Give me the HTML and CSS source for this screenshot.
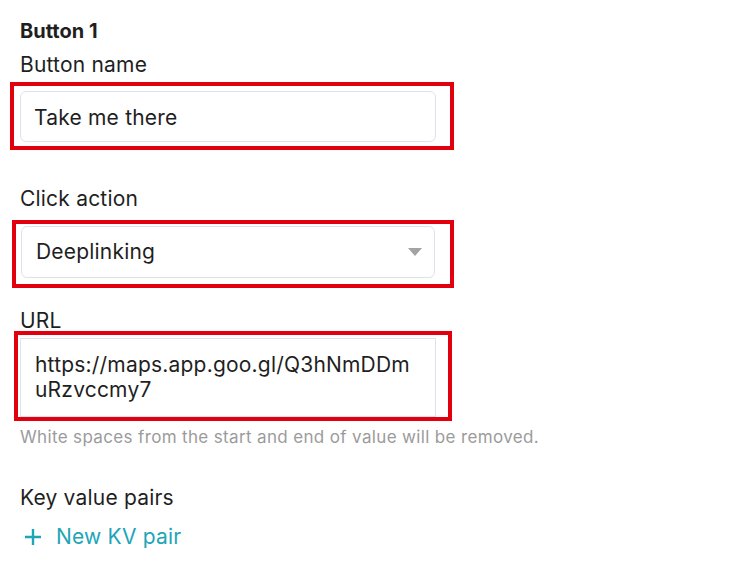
FILE: index.html
```html
<!DOCTYPE html>
<html lang="en">
<head>
<meta charset="utf-8">
<title>Button 1</title>
<link rel="stylesheet" href="styles.css">
</head>
<body>
<div class="panel">
  <div class="title">Button 1</div>
  <div class="label label-first">Button name</div>
  <div class="field field-name">
    <div class="input">Take me there</div>
    <span class="mark mark-name"></span>
  </div>

  <div class="label label-action">Click action</div>
  <div class="field field-select">
    <div class="select">
      <span>Deeplinking</span>
      <span class="caret"></span>
    </div>
    <span class="mark mark-select"></span>
  </div>

  <div class="label label-url">URL</div>
  <div class="field field-url">
    <div class="textarea">https://maps.app.goo.gl/Q3hNmDDm<br>uRzvccmy7</div>
    <span class="mark mark-url"></span>
  </div>
  <div class="hint">White spaces from the start and end of value will be removed.</div>

  <div class="label label-kv">Key value pairs</div>
  <div class="add">
    <svg class="plus" width="18" height="18" viewBox="0 0 18 18" aria-hidden="true">
      <path d="M9 1v16M1 9h16" stroke="currentColor" stroke-width="2.4" fill="none"/>
    </svg>
    <span>New KV pair</span>
  </div>
</div>
</body>
</html>
```
FILE: styles.css
```css
html, body {
  margin: 0;
  padding: 0;
  background: #ffffff;
}
body {
  font-family: Inter, "Noto Sans", "Liberation Sans", sans-serif;
  color: #1f1f1f;
  font-size: 21px;
  letter-spacing: 0.2px;
  line-height: 24px;
}
.panel {
  padding: 19px 0 0 20px;
  width: 416px;
}
.title {
  font-weight: 700;
  font-size: 20px;
  letter-spacing: 0;
}
.label-first { margin-top: 10px; }
.label-action { margin-top: 45px; }
.label-url { margin-top: 31px; }
.label-kv { margin-top: 39px; }

.field {
  position: relative;
}
.field-name { margin-top: 14px; }
.field-select { margin-top: 15px; }
.field-url { margin-top: 5px; }

.input {
  box-sizing: border-box;
  height: 51px;
  border: 1px solid #dde2ee;
  border-radius: 6px;
  padding: 13px 13px 11px;
  line-height: 25px;
}
.select {
  box-sizing: border-box;
  height: 52px;
  width: 414px;
  margin-left: 1px;
  border: 1px solid #dde2ee;
  border-radius: 6px;
  padding: 0 12px 0 14px;
  display: flex;
  align-items: center;
  justify-content: space-between;
}
.caret {
  width: 0;
  height: 0;
  border-left: 7.5px solid transparent;
  border-right: 7.5px solid transparent;
  border-top: 8px solid #a3a3a3;
}
.textarea {
  box-sizing: border-box;
  height: 79px;
  border: 1px solid #dde2ee;
  padding: 13px 14px 14px;
  line-height: 25px;
}
.hint {
  margin-top: 10px;
  font-size: 17px;
  letter-spacing: 0.35px;
  line-height: 20px;
  color: #9b9b9b;
  white-space: nowrap;
}
.add {
  margin-top: 15px;
  display: flex;
  align-items: center;
  gap: 14px;
  color: #1ea5b8;
}
.plus {
  margin-left: 4px;
  flex: none;
}
.mark {
  position: absolute;
  border: 4px solid #e2000f;
  pointer-events: none;
}
.mark-name { left: -10px; right: -18px; top: -9px; bottom: -8px; }
.mark-select { left: -8px; right: -18px; top: -6px; bottom: -10px; }
.mark-url { left: -6px; right: -16px; top: -7px; bottom: -4px; }
```
